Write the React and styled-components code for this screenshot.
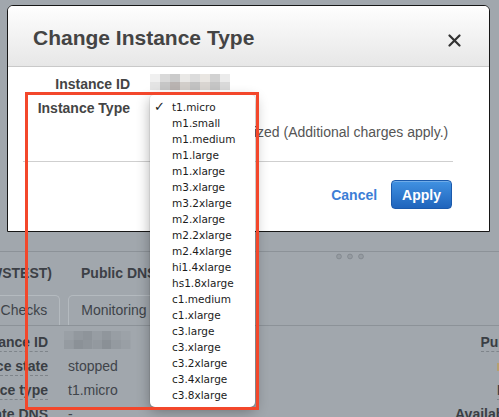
import styled, { createGlobalStyle } from "styled-components";

const GlobalStyle = createGlobalStyle`
  html, body {
    margin: 0;
    padding: 0;
  }
  body {
    background: #a1a7ad;
    font-family: "Liberation Sans", Arial, sans-serif;
  }
`;

const types = [
  "t1.micro", "m1.small", "m1.medium", "m1.large", "m1.xlarge",
  "m3.xlarge", "m3.2xlarge", "m2.xlarge", "m2.2xlarge", "m2.4xlarge",
  "hi1.4xlarge", "hs1.8xlarge", "c1.medium", "c1.xlarge", "c3.large",
  "c3.xlarge", "c3.2xlarge", "c3.4xlarge", "c3.8xlarge",
];

const idTop = ["#f0f0f0", "#d9d9d9", "#cbcbcb", "#e9e8e6", "#dcdcdc", "#e9e6e2", "#d2d2d2", "#ebebeb"];
const idBottom = ["#e4e4e4", "#c6c6c6", "#b9b3b1", "#d2ceca", "#c2c2c2", "#d9d5d1", "#c5c5c5", "#d9d9d9"];
const bgTop = ["#9aa0a6", "#92989e", "#8e949a", "#979da3", "#90969c", "#989ea4", "#9ca2a8"];
const bgBottom = ["#959ba1", "#8b9197", "#8f959b", "#93999f", "#8a9096", "#949aa0", "#999fa5"];

const Mosaic = ({ top, bottom, cell, h }) => (
  <svg width={top.length * cell} height={h * 2} style={{ display: "block" }}>
    {top.map((c, i) => (
      <rect key={"t" + i} x={i * cell} y={0} width={cell} height={h} fill={c} />
    ))}
    {bottom.map((c, i) => (
      <rect key={"b" + i} x={i * cell} y={h} width={cell} height={h} fill={c} />
    ))}
  </svg>
);

const details = [
  { label: "Instance ID", value: "id", right: "Public DNS" },
  { label: "Instance state", value: "stopped", right: "tan" },
  { label: "Instance type", value: "t1.micro", right: "Public IP" },
  { label: "Private DNS", value: "-", right: "Availability zone", plain: true },
];

const App = () => {
  return (
    <>
      <GlobalStyle />
      <Page>
        <TopPane />
        <Handle>
          <svg width="28" height="7">
            {[3, 14, 25].map((cx) => (
              <circle key={cx} cx={cx} cy="3.5" r="2.4" fill="#959ba1" stroke="#7f858b" strokeWidth="0.8" />
            ))}
          </svg>
        </Handle>
        <HeaderRow>
          <span>(AWSTEST)</span>
          <span>Public DNS</span>
        </HeaderRow>
        <Tabs>
          <Tab>Status Checks</Tab>
          <Tab>Monitoring</Tab>
        </Tabs>
        <Details>
          {details.map((d) => (
            <DetailRow key={d.label}>
              <DetailLabel>
                <Dashed>{d.label}</Dashed>
              </DetailLabel>
              <DetailValue>
                {d.value === "id" ? (
                  <BlurShift>
                    <Mosaic top={bgTop} bottom={bgBottom} cell={9.5} h={9} />
                  </BlurShift>
                ) : (
                  d.value
                )}
              </DetailValue>
              <RightCol>
                {d.right === "tan" ? (
                  <TanBar />
                ) : d.plain ? (
                  d.right
                ) : (
                  <Dashed>{d.right}</Dashed>
                )}
              </RightCol>
            </DetailRow>
          ))}
        </Details>

        <Modal>
          <ModalHeader>
            <Title>Change Instance Type</Title>
            <Close>
              <svg width="13" height="13" viewBox="0 0 13 13">
                <path d="M1.5 1.5 L11.5 11.5 M11.5 1.5 L1.5 11.5" stroke="#333" strokeWidth="2.2" strokeLinecap="round" />
              </svg>
            </Close>
          </ModalHeader>
          <ModalBody>
            <FormRow>
              <FormLabel>Instance ID</FormLabel>
              <IdValue>
                <Mosaic top={idTop} bottom={idBottom} cell={10} h={8} />
              </IdValue>
            </FormRow>
            <FormRow>
              <FormLabel>Instance Type</FormLabel>
              <div />
            </FormRow>
            <FormRow>
              <FormLabel />
              <CheckLine>
                <CheckBox />
                EBS-optimized (Additional charges apply.)
              </CheckLine>
            </FormRow>
            <Separator />
            <Footer>
              <CancelLink>Cancel</CancelLink>
              <ApplyButton>Apply</ApplyButton>
            </Footer>
          </ModalBody>
        </Modal>

        <Menu>
          {types.map((t, i) => (
            <MenuItem key={t}>
              <Check>{i === 0 ? "✓" : ""}</Check>
              {t}
            </MenuItem>
          ))}
        </Menu>

        <Highlight />
      </Page>
    </>
  );
};

const Page = styled.div`
  position: relative;
  width: 499px;
  height: 417px;
  overflow: hidden;
  background: #a1a7ad;
  color: #3c4046;
`;

const TopPane = styled.div`
  height: 251px;
  border-bottom: 1px solid #8c9298;
`;

const Handle = styled.div`
  height: 11px;
  box-sizing: border-box;
  padding: 1px 0 0 336px;
  display: flex;
`;

const HeaderRow = styled.div`
  display: flex;
  gap: 29px;
  margin-left: -25px;
  height: 20px;
  line-height: 20px;
  font-size: 14px;
  font-weight: bold;
  white-space: nowrap;
`;

const Tabs = styled.div`
  display: flex;
  gap: 8px;
  margin: 12px 0 0 -56px;
  border-bottom: 1px solid #8c9298;
`;

const Tab = styled.div`
  height: 30px;
  box-sizing: border-box;
  padding: 0 12px;
  border: 1px solid #b4babf;
  border-bottom: none;
  border-radius: 5px 5px 0 0;
  line-height: 29px;
  font-size: 14px;
  color: #3e4349;
  white-space: nowrap;
`;

const Details = styled.div`
  margin-left: -102px;
  width: 658px;
  padding-top: 4px;
`;

const DetailRow = styled.div`
  display: flex;
  align-items: center;
  height: 24px;
  font-size: 14px;
  white-space: nowrap;
`;

const DetailLabel = styled.div`
  width: 150px;
  flex-shrink: 0;
  text-align: right;
  font-weight: bold;
  color: #3a3e44;
`;

const Dashed = styled.span`
  border-bottom: 1px dashed #7e848a;
  padding-bottom: 1px;
`;

const DetailValue = styled.div`
  width: 407px;
  flex-shrink: 0;
  box-sizing: border-box;
  padding-left: 20px;
  color: #40444a;
`;

const BlurShift = styled.div`
  margin: 0 0 4px -4px;
`;

const RightCol = styled.div`
  width: 101px;
  flex-shrink: 0;
  text-align: right;
  font-weight: bold;
  color: #3a3e44;
`;

const TanBar = styled.span`
  display: inline-block;
  width: 59px;
  height: 8px;
  background: #b3a071;
`;

const Modal = styled.div`
  position: absolute;
  left: 7px;
  top: 5px;
  width: 483px;
  box-sizing: border-box;
  background: #fff;
  border: 1px solid #161616;
  border-radius: 6px 6px 0 0;
  overflow: hidden;
`;

const ModalHeader = styled.div`
  height: 61px;
  box-sizing: border-box;
  padding: 4px 28px 0 25px;
  display: flex;
  align-items: center;
  justify-content: space-between;
  background: linear-gradient(#fefefe, #e7e7e7);
  border-bottom: 1px solid #c9c9c9;
`;

const Title = styled.div`
  font-size: 21px;
  font-weight: bold;
  color: #444;
`;

const Close = styled.div`
  display: flex;
  margin-top: 4px;
`;

const ModalBody = styled.div`
  padding: 5px 36px 0 0;
`;

const FormRow = styled.div`
  display: grid;
  grid-template-columns: 122px 1fr;
  column-gap: 20px;
  align-items: center;
  height: 24px;
`;

const FormLabel = styled.div`
  text-align: right;
  font-size: 14px;
  font-weight: bold;
  color: #444;
`;

const IdValue = styled.div`
  margin-bottom: 4px;
`;

const CheckLine = styled.div`
  display: flex;
  align-items: center;
  font-size: 14px;
  color: #555;
  white-space: nowrap;
`;

const CheckBox = styled.span`
  width: 12px;
  height: 12px;
  margin: 0 7px 0 16px;
  border: 1px solid #aaa;
  border-radius: 2px;
  background: #fff;
`;

const Separator = styled.div`
  margin: 17px 0 0 15px;
  border-top: 1px solid #cfcfcf;
`;

const Footer = styled.div`
  display: flex;
  justify-content: flex-end;
  align-items: center;
  gap: 14px;
  padding: 18px 1px 22px 0;
`;

const CancelLink = styled.span`
  font-size: 14px;
  font-weight: bold;
  color: #3c7ed6;
`;

const ApplyButton = styled.button`
  height: 29px;
  padding: 0 10px;
  border: 1px solid #1b5aac;
  border-radius: 4px;
  background: linear-gradient(#4192e2, #1f64bc);
  box-shadow: inset 0 1px 0 rgba(255, 255, 255, 0.25);
  color: #fff;
  font-family: "Liberation Sans", Arial, sans-serif;
  font-size: 14px;
  font-weight: bold;
`;

const Menu = styled.div`
  position: absolute;
  left: 150px;
  top: 95px;
  width: 105px;
  padding: 4px 0;
  background: #fff;
  border-radius: 4px 4px 5px 5px;
  box-shadow: 0 4px 14px rgba(0, 0, 0, 0.32), 0 0 0 1px rgba(0, 0, 0, 0.06);
`;

const MenuItem = styled.div`
  display: flex;
  height: 16px;
  line-height: 16px;
  font-family: "DejaVu Sans", sans-serif;
  font-size: 10.5px;
  color: #1c1c1c;
  white-space: nowrap;
`;

const Check = styled.span`
  width: 22px;
  box-sizing: border-box;
  padding-left: 4px;
  font-size: 13px;
  font-weight: bold;
`;

const Highlight = styled.div`
  position: absolute;
  left: 25px;
  top: 92px;
  width: 234px;
  height: 318px;
  box-sizing: border-box;
  border: 3px solid #f3472b;
  pointer-events: none;
`;

export default App;
